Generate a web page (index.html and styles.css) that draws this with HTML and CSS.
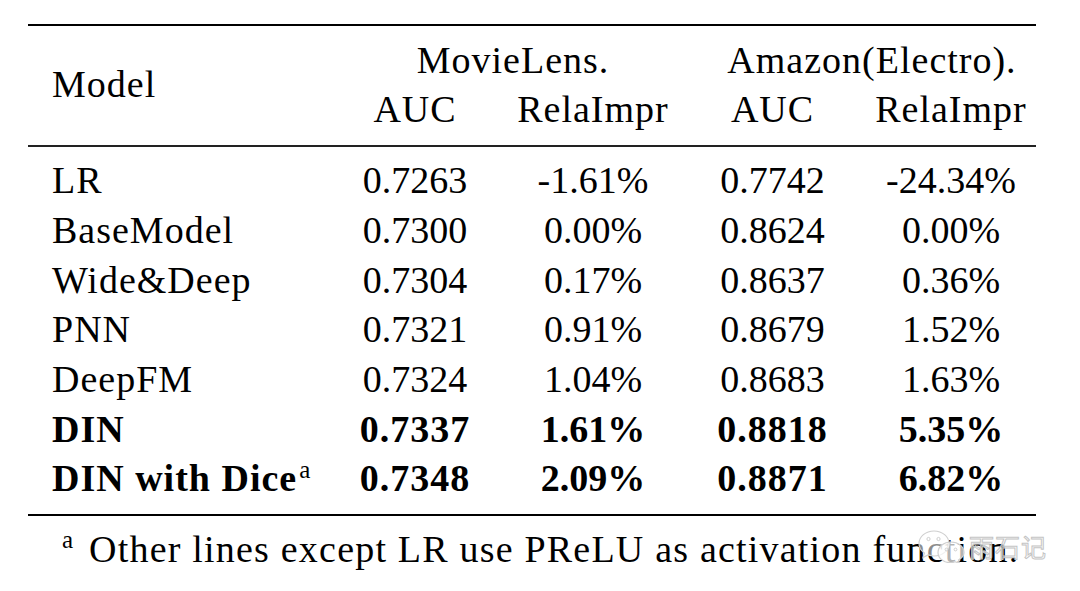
FILE: index.html
```html
<!DOCTYPE html>
<html lang="en">
<head>
<meta charset="utf-8">
<title>DIN results</title>
<link rel="stylesheet" href="styles.css">
</head>
<body>
<div class="page">
  <div class="table">
    <div class="head">
      <div class="c-model">Model</div>
      <div class="c-group g1">MovieLens.</div>
      <div class="c-group g2">Amazon(Electro).</div>
      <div class="c c2 r2">AUC</div>
      <div class="c c3 r2">RelaImpr</div>
      <div class="c c4 r2">AUC</div>
      <div class="c c5 r2">RelaImpr</div>
    </div>
    <div class="body">
      <div class="row"><div class="name">LR</div><div class="c c2">0.7263</div><div class="c c3">-1.61%</div><div class="c c4">0.7742</div><div class="c c5">-24.34%</div></div>
      <div class="row"><div class="name">BaseModel</div><div class="c c2">0.7300</div><div class="c c3">0.00%</div><div class="c c4">0.8624</div><div class="c c5">0.00%</div></div>
      <div class="row"><div class="name">Wide&amp;Deep</div><div class="c c2">0.7304</div><div class="c c3">0.17%</div><div class="c c4">0.8637</div><div class="c c5">0.36%</div></div>
      <div class="row"><div class="name">PNN</div><div class="c c2">0.7321</div><div class="c c3">0.91%</div><div class="c c4">0.8679</div><div class="c c5">1.52%</div></div>
      <div class="row"><div class="name">DeepFM</div><div class="c c2">0.7324</div><div class="c c3">1.04%</div><div class="c c4">0.8683</div><div class="c c5">1.63%</div></div>
      <div class="row bold"><div class="name">DIN</div><div class="c c2">0.7337</div><div class="c c3">1.61%</div><div class="c c4">0.8818</div><div class="c c5">5.35%</div></div>
      <div class="row bold"><div class="name">DIN with Dice<sup class="fn">a</sup></div><div class="c c2">0.7348</div><div class="c c3">2.09%</div><div class="c c4">0.8871</div><div class="c c5">6.82%</div></div>
    </div>
    <div class="note"><sup class="fn-note">a</sup>Other lines except LR use PReLU as activation function.</div>
  </div>
  <div class="watermark">
    <svg class="wx" width="50" height="34" viewBox="0 0 50 34">
      <path d="M17 2 C8.7 2 2 7.6 2 14.5 C2 18.4 4.1 21.8 7.4 24.1 L6 28.5 L11 25.9 C12.9 26.6 15 27 17 27 C25.3 27 32 21.4 32 14.5 C32 7.6 25.3 2 17 2 Z" fill="rgba(255,255,255,0.55)" stroke="#cfcfcf" stroke-width="1.2"/>
      <circle cx="11.5" cy="10" r="1.6" fill="none" stroke="#cfcfcf" stroke-width="1"/>
      <circle cx="21.5" cy="10" r="1.6" fill="none" stroke="#cfcfcf" stroke-width="1"/>
      <path d="M34 13 C26.8 13 21 17.7 21 23.5 C21 29.3 26.8 34 34 33.6 C35.6 33.6 37.1 33.3 38.5 32.8 L42.5 34.5 L41.5 30.9 C44.9 29 47 26.4 47 23.5 C47 17.7 41.2 13 34 13 Z" fill="rgba(255,255,255,0.7)" stroke="#cfcfcf" stroke-width="1.2"/>
      <circle cx="29.5" cy="20.5" r="1.4" fill="none" stroke="#cfcfcf" stroke-width="1"/>
      <circle cx="38.5" cy="20.5" r="1.4" fill="none" stroke="#cfcfcf" stroke-width="1"/>
    </svg>
    <span class="wm-text">雨石记</span>
  </div>
</div>
</body>
</html>
```

FILE: styles.css
```css
html, body {
  margin: 0;
  padding: 0;
  background: #ffffff;
}

.page {
  position: relative;
  width: 1080px;
  height: 591px;
  overflow: hidden;
  font-family: "Liberation Serif", "Times New Roman", serif;
  font-size: 38px;
  color: #000000;
}

.table {
  margin-left: 28px;
  padding-top: 24px;
  width: 1008px;
}

.head {
  display: grid;
  grid-template-columns: 307px 160px 196px 163px 182px;
  grid-template-rows: 49px 49px;
  line-height: 49px;
  padding: 9.67px 0 11.33px;
  border-top: 2px solid #000;
  border-bottom: 2px solid #222;
  letter-spacing: 1px;
}

.c-model {
  grid-column: 1;
  grid-row: 1 / span 2;
  align-self: center;
  padding-left: 24px;
}

.c-group {
  grid-row: 1;
  text-align: center;
}

.g1 {
  grid-column: 2 / span 2;
}

.g2 {
  grid-column: 4 / span 2;
  padding-left: 17px;
}

.r2 {
  grid-row: 2;
}

.c {
  text-align: center;
  white-space: nowrap;
}

.c2 { grid-column: 2; }
.c3 { grid-column: 3; }
.c4 { grid-column: 4; }
.c5 { grid-column: 5; padding-left: 12px; }

.body {
  padding: 9.3px 0 9.8px;
  border-bottom: 2px solid #000;
}

.row {
  display: grid;
  grid-template-columns: 307px 160px 196px 163px 182px;
  height: 49.7px;
  line-height: 49.7px;
}

.name {
  padding-left: 24px;
  white-space: nowrap;
  letter-spacing: 1px;
}

.bold {
  font-weight: bold;
}

.bold .c2,
.bold .c4 {
  letter-spacing: 1px;
}

.fn {
  font-size: 25px;
  font-weight: normal;
  line-height: 0;
  vertical-align: 13px;
  margin-left: 2px;
}

.note {
  padding: 9.3px 0 0 34px;
  line-height: 49.7px;
  letter-spacing: 1.2px;
  white-space: nowrap;
}

.fn-note {
  font-size: 25px;
  line-height: 0;
  vertical-align: 14px;
  letter-spacing: 0;
  margin-right: 16px;
}

.watermark {
  position: absolute;
  left: 917px;
  top: 529px;
  display: flex;
  align-items: center;
  gap: 2px;
}

.wx {
  display: block;
}

.wm-text {
  font-family: "Noto Sans CJK SC", sans-serif;
  font-size: 25px;
  line-height: 30px;
  color: rgba(255, 255, 255, 0.55);
  -webkit-text-stroke: 1px #c4c4c4;
  letter-spacing: 1px;
}
```
